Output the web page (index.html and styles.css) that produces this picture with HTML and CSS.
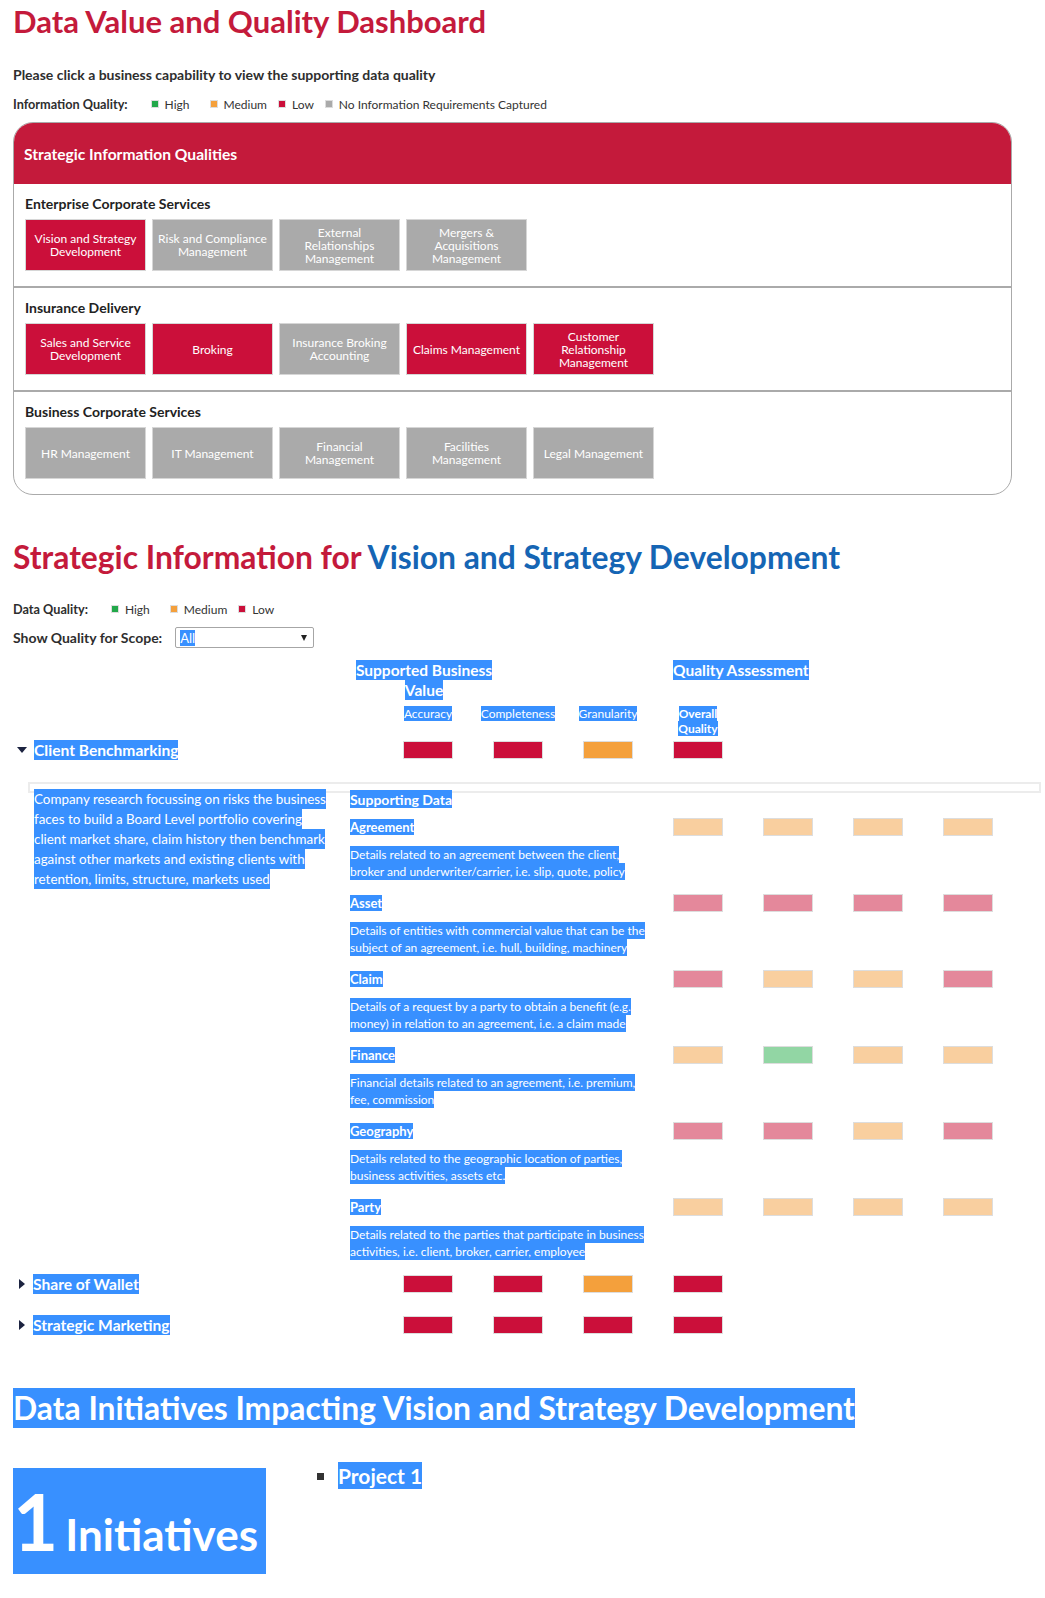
FILE: index.html
```html
<!DOCTYPE html>
<html lang="en">
<head>
<meta charset="utf-8">
<title>Data Value and Quality Dashboard</title>
<link rel="stylesheet" href="styles.css">
</head>
<body>
<div class="page">
  <h1 class="title">Data Value and Quality Dashboard</h1>
  <p class="intro">Please click a business capability to view the supporting data quality</p>
  <div class="legend legend-top">
    <span class="legend-label">Information Quality:</span>
    <span class="legend-item gap-l"><i class="sq sq-high"></i>High</span>
    <span class="legend-item gap-s"><i class="sq sq-medium"></i>Medium</span>
    <span class="legend-item gap-s"><i class="sq sq-low"></i>Low</span>
    <span class="legend-item"><i class="sq sq-none"></i>No Information Requirements Captured</span>
  </div>

  <div class="panel">
    <div class="panel-header">Strategic Information Qualities</div>
    <div class="panel-section">
      <div class="section-title">Enterprise Corporate Services</div>
      <div class="caps">
        <div class="cap cap-low">Vision and Strategy<br>Development</div>
        <div class="cap cap-none">Risk and Compliance<br>Management</div>
        <div class="cap cap-none">External<br>Relationships<br>Management</div>
        <div class="cap cap-none">Mergers &amp;<br>Acquisitions<br>Management</div>
      </div>
    </div>
    <div class="panel-section">
      <div class="section-title">Insurance Delivery</div>
      <div class="caps">
        <div class="cap cap-low">Sales and Service<br>Development</div>
        <div class="cap cap-low">Broking</div>
        <div class="cap cap-none">Insurance Broking<br>Accounting</div>
        <div class="cap cap-low">Claims Management</div>
        <div class="cap cap-low">Customer<br>Relationship<br>Management</div>
      </div>
    </div>
    <div class="panel-section">
      <div class="section-title">Business Corporate Services</div>
      <div class="caps">
        <div class="cap cap-none">HR Management</div>
        <div class="cap cap-none">IT Management</div>
        <div class="cap cap-none">Financial<br>Management</div>
        <div class="cap cap-none">Facilities<br>Management</div>
        <div class="cap cap-none">Legal Management</div>
      </div>
    </div>
  </div>

  <h2 class="h2 h2-strat">Strategic Information for <span class="blue">Vision and Strategy Development</span></h2>

  <div class="legend legend-dq">
    <span class="legend-label">Data Quality:</span>
    <span class="legend-item gap-l"><i class="sq sq-high"></i>High</span>
    <span class="legend-item gap-s"><i class="sq sq-medium"></i>Medium</span>
    <span class="legend-item"><i class="sq sq-low"></i>Low</span>
  </div>

  <div class="scope">
    <span class="scope-label">Show Quality for Scope:</span>
    <div class="select"><span class="hl">All</span><i class="select-arrow"></i></div>
  </div>

  <div class="colhead">
    <div class="c-biz"><span class="hl hl-h">Supported Business</span><br><span class="hl hl-h">Value</span></div>
    <div class="c-qa"><span class="hl hl-h">Quality Assessment</span></div>
  </div>

  <div class="qgrid subhead">
    <div class="sh sh-first"><span class="hl">Accuracy</span></div>
    <div class="sh"><span class="hl">Completeness</span></div>
    <div class="sh"><span class="hl">Granularity</span></div>
    <div class="sh sh-bold"><span class="hl">Overall</span><br><span class="hl">Quality</span></div>
  </div>

  <div class="qgrid qrow row-client">
    <div class="name"><i class="tri-down"></i><span class="hl">Client Benchmarking</span></div>
    <i class="bar r"></i><i class="bar r"></i><i class="bar o"></i><i class="bar r"></i>
  </div>

  <div class="detail-frame"></div>
  <div class="detail">
    <div class="d-main"><span class="hl hl-main">Company research focussing on risks the business<br>faces to build a Board Level portfolio covering<br>client market share, claim history then benchmark<br>against other markets and existing clients with<br>retention, limits, structure, markets used</span></div>
    <div class="d-title"><span class="hl hl-title">Supporting Data</span></div>

    <div class="d-name"><span class="hl">Agreement</span></div>
    <i class="bar lo"></i><i class="bar lo"></i><i class="bar lo"></i><i class="bar lo"></i>
    <div class="d-desc"><span class="hl hl-desc">Details related to an agreement between the client,<br>broker and underwriter/carrier, i.e. slip, quote, policy</span></div>

    <div class="d-name"><span class="hl">Asset</span></div>
    <i class="bar lr"></i><i class="bar lr"></i><i class="bar lr"></i><i class="bar lr"></i>
    <div class="d-desc"><span class="hl hl-desc">Details of entities with commercial value that can be the<br>subject of an agreement, i.e. hull, building, machinery</span></div>

    <div class="d-name"><span class="hl">Claim</span></div>
    <i class="bar lr"></i><i class="bar lo"></i><i class="bar lo"></i><i class="bar lr"></i>
    <div class="d-desc"><span class="hl hl-desc">Details of a request by a party to obtain a benefit (e.g.<br>money) in relation to an agreement, i.e. a claim made</span></div>

    <div class="d-name"><span class="hl">Finance</span></div>
    <i class="bar lo"></i><i class="bar lg"></i><i class="bar lo"></i><i class="bar lo"></i>
    <div class="d-desc"><span class="hl hl-desc">Financial details related to an agreement, i.e. premium,<br>fee, commission</span></div>

    <div class="d-name"><span class="hl">Geography</span></div>
    <i class="bar lr"></i><i class="bar lr"></i><i class="bar lo"></i><i class="bar lr"></i>
    <div class="d-desc"><span class="hl hl-desc">Details related to the geographic location of parties,<br>business activities, assets etc. </span></div>

    <div class="d-name"><span class="hl">Party</span></div>
    <i class="bar lo"></i><i class="bar lo"></i><i class="bar lo"></i><i class="bar lo"></i>
    <div class="d-desc d-last"><span class="hl hl-desc">Details related to the parties that participate in business<br>activities, i.e. client, broker, carrier, employee</span></div>
  </div>

  <div class="qgrid qrow row-share">
    <div class="name"><i class="tri-right"></i><span class="hl">Share of Wallet</span></div>
    <i class="bar r"></i><i class="bar r"></i><i class="bar o"></i><i class="bar r"></i>
  </div>
  <div class="qgrid qrow row-next">
    <div class="name"><i class="tri-right"></i><span class="hl">Strategic Marketing</span></div>
    <i class="bar r"></i><i class="bar r"></i><i class="bar r"></i><i class="bar r"></i>
  </div>

  <h2 class="h2 h2-init"><span class="hl hl-h2">Data Initiatives Impacting Vision and Strategy Development</span></h2>

  <div class="init-row">
    <div class="init-box"><span class="init-num">1</span><span class="init-word">Initiatives</span></div>
    <ul class="proj-list">
      <li><span class="hl hl-proj">Project 1</span></li>
    </ul>
  </div>
</div>
</body>
</html>
```
FILE: styles.css
```css
* { box-sizing: border-box; }

body {
  margin: 0;
  background: #ffffff;
  font-family: Lato, "Open Sans", sans-serif;
  color: #333333;
}

.page {
  padding: 1px 0 0 13px;
}

.hl {
  background: #3890ff;
  color: #ffffff;
}

/* ---------- top ---------- */
.title {
  margin: 0;
  font-size: 31px;
  line-height: 40px;
  font-weight: 700;
  color: #c41a3b;
}

.intro {
  margin: 24px 0 0;
  font-size: 14px;
  line-height: 20px;
  font-weight: 700;
  color: #2e2e2e;
}

.legend {
  display: flex;
  align-items: center;
  height: 20px;
  font-size: 12px;
  color: #333333;
}
.legend-top { margin-top: 9px; }

.legend-label {
  font-size: 12.7px;
  font-weight: 700;
  margin-right: 23px;
  color: #2e2e2e;
}

.legend-item {
  display: inline-flex;
  align-items: center;
}
.gap-l { margin-right: 20px; }
.gap-s { margin-right: 11px; }

.sq {
  display: inline-block;
  width: 8px;
  height: 8px;
  border: 1px solid #dddddd;
  margin-right: 6px;
}
.sq-high { background: #22a84a; }
.sq-medium { background: #f4a03c; }
.sq-low { background: #cb0f3a; }
.sq-none { background: #aaaaaa; }

/* ---------- panel ---------- */
.panel {
  margin-top: 8px;
  width: 999px;
  border: 1px solid #aaaaaa;
  border-radius: 20px;
  overflow: hidden;
}

.panel-header {
  height: 61px;
  background: #c41a3b;
  color: #ffffff;
  font-weight: 700;
  font-size: 15.6px;
  display: flex;
  align-items: center;
  padding-left: 10px;
}

.panel-section {
  padding: 10px 11px 15px;
}
.panel-section + .panel-section {
  border-top: 2px solid #aaaaaa;
}

.section-title {
  font-size: 14px;
  font-weight: 700;
  line-height: 20px;
  color: #222222;
}

.caps {
  display: flex;
  gap: 6px;
  margin-top: 5px;
}

.cap {
  width: 121px;
  height: 52px;
  border: 1px solid #d6d6d6;
  display: flex;
  align-items: center;
  justify-content: center;
  text-align: center;
  color: #ffffff;
  font-size: 12px;
  line-height: 13px;
  padding: 0 2px;
  white-space: nowrap;
}
.cap-low { background: #cb0f3a; }
.cap-none { background: #aaaaaa; }

/* ---------- strategic info ---------- */
.h2 {
  margin: 0;
  font-size: 31.8px;
  line-height: 40px;
  font-weight: 700;
  color: #c41a3b;
}
.h2-strat { margin-top: 42px; }
.h2 .blue { color: #1565b4; }

.legend-dq { margin-top: 22px; }

.scope {
  display: flex;
  align-items: center;
  height: 21px;
  margin-top: 8px;
}

.scope-label {
  font-size: 14px;
  font-weight: 700;
  margin-right: 13px;
  color: #2e2e2e;
}

.select {
  width: 139px;
  height: 21px;
  border: 1px solid #a6a6a6;
  border-radius: 2px;
  display: flex;
  align-items: center;
  justify-content: space-between;
  padding: 0 6px 0 4px;
  font-size: 13px;
}

.select-arrow {
  width: 0;
  height: 0;
  border-left: 3.5px solid transparent;
  border-right: 3.5px solid transparent;
  border-top: 6px solid #222222;
}

.colhead {
  display: grid;
  grid-template-columns: 340px 142px 178px auto;
  margin-top: 12px;
  font-size: 15.5px;
  font-weight: 700;
  line-height: 20px;
  white-space: nowrap;
}
.c-biz { grid-column: 2; text-align: center; }
.c-qa { grid-column: 4; }
.hl-h { padding: 0.7px 0; }

.qgrid {
  display: grid;
  grid-template-columns: 370px repeat(4, 90px);
}

.subhead {
  margin-top: 6px;
  height: 30px;
  font-size: 12px;
  line-height: 15px;
}
.sh { text-align: center; }
.sh-first { grid-column: 2; }
.sh-bold { font-weight: 700; }

.qrow {
  height: 20px;
  align-items: center;
}
.row-client { margin-top: 4px; }
.row-share { margin-top: 14px; }
.row-next { margin-top: 21px; }

.name {
  display: flex;
  align-items: center;
  font-size: 15.6px;
  font-weight: 700;
  line-height: 20px;
}

.tri-down {
  width: 0;
  height: 0;
  margin: 0 7px 0 4px;
  border-left: 5px solid transparent;
  border-right: 5px solid transparent;
  border-top: 6px solid #1c2340;
}

.tri-right {
  width: 0;
  height: 0;
  margin: 0 8px 0 6px;
  border-top: 5.5px solid transparent;
  border-bottom: 5.5px solid transparent;
  border-left: 6px solid #1c2340;
}

.bar {
  display: block;
  width: 50px;
  height: 18px;
  border: 1px solid #dddddd;
  justify-self: center;
  align-self: center;
}
.bar.r { background: #cb0f3a; }
.bar.o { background: #f4a03c; }
.bar.lr { background: #e4889b; }
.bar.lo { background: #f9cf9f; }
.bar.lg { background: #92d6a4; }

/* ---------- detail ---------- */
.detail-frame {
  margin: 22px 0 0 15px;
  width: 1013px;
  height: 11px;
  border: 2px solid #ececec;
}

.detail {
  display: grid;
  grid-template-columns: 337px 303px repeat(4, 90px);
  margin-top: -4px;
  position: relative;
}

.d-main {
  grid-column: 1;
  grid-row: 1 / span 13;
  padding-left: 21px;
  font-size: 13.4px;
  line-height: 20px;
  white-space: nowrap;
}
.hl-main { padding: 1.96px 0; }

.d-title {
  grid-column: 2 / span 5;
  font-size: 14px;
  font-weight: 700;
  line-height: 20px;
  margin-bottom: 9px;
}
.hl-title { padding: 0.5px 0; }

.d-name {
  grid-column: 2;
  font-size: 13px;
  font-weight: 700;
  line-height: 18px;
}

.d-desc {
  grid-column: 2;
  font-size: 12px;
  line-height: 17px;
  margin: 10px 0 14px;
  white-space: nowrap;
}
.d-last { margin-bottom: 0; }
.hl-desc { padding: 1.3px 0; }

/* ---------- initiatives ---------- */
.h2-init { margin-top: 53px; }
.hl-h2 { padding: 0.9px 0; }

.init-row {
  display: flex;
  align-items: flex-start;
  margin-top: 34px;
}

.init-box {
  margin-top: 6px;
  width: 253px;
  height: 106px;
  background: #3890ff;
  color: #ffffff;
  display: flex;
  align-items: baseline;
  padding: 14px 0 0 0;
  font-weight: 700;
}
.init-num { font-size: 78px; line-height: 78px; }
.init-word { font-size: 44px; line-height: 44px; margin-left: 7px; }

.proj-list {
  margin: 0 0 0 32px;
  padding-left: 40px;
  list-style: square;
  font-size: 21px;
  font-weight: 700;
  line-height: 27px;
  color: #333333;
}
.hl-proj { padding: 0.8px 0; }
```
